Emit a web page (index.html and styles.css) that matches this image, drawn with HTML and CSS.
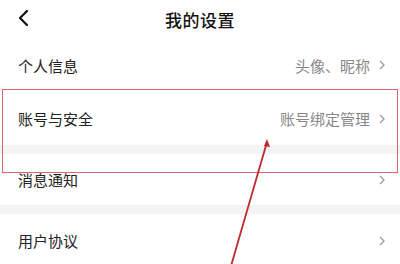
FILE: index.html
```html
<!DOCTYPE html>
<html lang="zh-CN">
<head>
    <meta charset="UTF-8">
    <meta name="viewport" content="width=device-width, initial-scale=1.0">
    <title>我的设置</title>
    <link rel="stylesheet" href="styles.css">
</head>
<body>
    <div class="page">
        <div class="header">
            <svg class="back" width="14" height="18" viewBox="0 0 14 18">
                <path d="M11 2 L4 9 L11 16" fill="none" stroke="#111" stroke-width="2.2" stroke-linecap="round" stroke-linejoin="round"/>
            </svg>
            <div class="title">我的设置</div>
        </div>

        <div class="row first">
            <span class="label">个人信息</span>
            <span class="value">头像、昵称</span>
            <svg class="arrow" width="8" height="12" viewBox="0 0 8 12"><path d="M2 2 L6 6 L2 10" fill="none" stroke="#999" stroke-width="1.3"/></svg>
        </div>
        <div class="row">
            <span class="label">账号与安全</span>
            <span class="value">账号绑定管理</span>
            <svg class="arrow" width="8" height="12" viewBox="0 0 8 12"><path d="M2 2 L6 6 L2 10" fill="none" stroke="#999" stroke-width="1.3"/></svg>
        </div>
        <div class="gap"></div>
        <div class="row short">
            <span class="label">消息通知</span>
            <span class="value"></span>
            <svg class="arrow" width="8" height="12" viewBox="0 0 8 12"><path d="M2 2 L6 6 L2 10" fill="none" stroke="#999" stroke-width="1.3"/></svg>
        </div>
        <div class="gap"></div>
        <div class="row">
            <span class="label">用户协议</span>
            <span class="value"></span>
            <svg class="arrow" width="8" height="12" viewBox="0 0 8 12"><path d="M2 2 L6 6 L2 10" fill="none" stroke="#999" stroke-width="1.3"/></svg>
        </div>

        <!-- annotation on top of the screenshot -->
        <div class="highlight"></div>
        <svg class="pointer" width="400" height="264" viewBox="0 0 400 264">
            <line x1="267" y1="142" x2="231" y2="266" stroke="#c0282e" stroke-width="1.8"/>
            <path d="M267 139 L264 146 L270 147 Z" fill="#c0282e"/>
        </svg>
    </div>
</body>
</html>
```

FILE: styles.css
```css
* {
    margin: 0;
    padding: 0;
    box-sizing: border-box;
}

body {
    font-family: "Noto Sans CJK SC", "Noto Sans", sans-serif;
    background: #fff;
    width: 400px;
    height: 264px;
    overflow: hidden;
}

.page {
    position: relative;
    width: 400px;
    height: 264px;
}

.header {
    height: 38px;
    display: flex;
    align-items: center;
    justify-content: center;
    position: relative;
}

.back {
    position: absolute;
    left: 16px;
    top: 9px;
}

.title {
    font-size: 17px;
    font-weight: 500;
    color: #111;
    letter-spacing: 0.5px;
}

.row {
    height: 53px;
    display: flex;
    align-items: center;
    padding: 0 14px 0 18px;
    background: #fff;
}

.row.first {
    height: 54px;
}

.row.short {
    height: 51px;
}

.label {
    font-size: 15px;
    color: #222;
    flex: 1;
}

.value {
    font-size: 15px;
    color: #888;
    margin-right: 8px;
}

.arrow {
    display: block;
}

.gap {
    height: 9px;
    background: #f4f4f4;
}

.highlight {
    position: absolute;
    left: 2px;
    top: 89px;
    width: 396px;
    height: 84px;
    border: 1.5px solid #d9646a;
}

.pointer {
    position: absolute;
    left: 0;
    top: 0;
}
```
